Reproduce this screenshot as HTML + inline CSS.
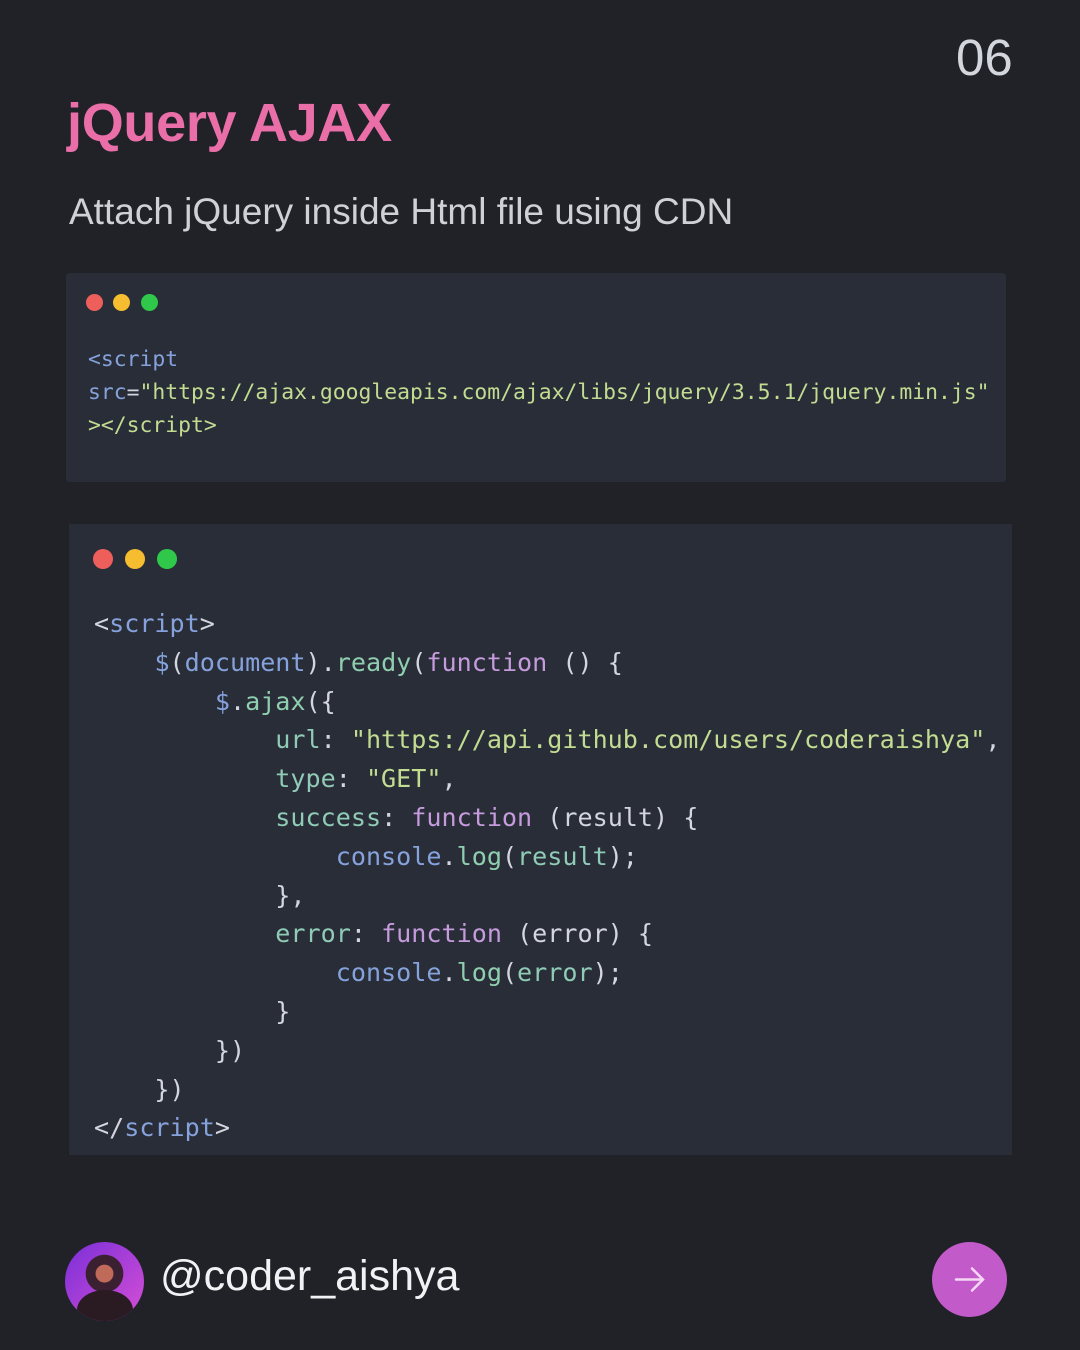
<!DOCTYPE html>
<html><head><style>
body{margin:0;width:1080px;height:1350px;background:#202228;position:relative;overflow:hidden;font-family:"Liberation Sans",sans-serif}
.a{position:absolute}
.code{font-family:"DejaVu Sans Mono","Liberation Mono",monospace;white-space:pre;color:#d3d6de}
.t{color:#86a2dc}.s{color:#c2dc92}.p{color:#8fcbb6}.k{color:#c59bdd}.m{color:#8fcfb0}
.dot{position:absolute;border-radius:50%}
</style></head><body>
<div class="a" style="left:956px;top:28px;font-size:51px;color:#d4d6de">06</div>
<div class="a" style="left:67px;top:92px;font-size:54px;font-weight:bold;color:#ea6fa8;letter-spacing:-0.3px">jQuery AJAX</div>
<div class="a" style="left:69px;top:191px;font-size:37px;color:#d0d1d6">Attach jQuery inside Html file using CDN</div>

<div class="a" style="left:66px;top:273px;width:940px;height:209px;background:#292d37;border-radius:3px">
<div class="dot" style="left:20px;top:21px;width:17px;height:17px;background:#ee5f5b"></div>
<div class="dot" style="left:47px;top:21px;width:17px;height:17px;background:#f5bd2f"></div>
<div class="dot" style="left:75px;top:21px;width:17px;height:17px;background:#2fc84a"></div>
<div class="a code" style="left:22px;top:70px;font-size:21.4px;line-height:33px"><span class="t">&lt;script</span>
<span class="t">src</span>=<span class="s">"https://ajax.googleapis.com/ajax/libs/jquery/3.5.1/jquery.min.js"</span>
<span class="s">&gt;&lt;/script&gt;</span></div>
</div>

<div class="a" style="left:69px;top:524px;width:943px;height:631px;background:#292d37">
<div class="dot" style="left:24px;top:25px;width:20px;height:20px;background:#ee5f5b"></div>
<div class="dot" style="left:56px;top:25px;width:20px;height:20px;background:#f5bd2f"></div>
<div class="dot" style="left:88px;top:25px;width:20px;height:20px;background:#2fc84a"></div>
<div class="a code" style="left:25px;top:81px;font-size:25.1px;line-height:38.8px">&lt;<span class="t">script</span>&gt;
    <span class="t">$</span>(<span class="t">document</span>).<span class="m">ready</span>(<span class="k">function</span> () {
        <span class="t">$</span>.<span class="m">ajax</span>({
            <span class="p">url</span>: <span class="s">"https://api.github.com/users/coderaishya"</span>,
            <span class="p">type</span>: <span class="s">"GET"</span>,
            <span class="p">success</span>: <span class="k">function</span> (result) {
                <span class="t">console</span>.<span class="m">log</span>(<span class="p">result</span>);
            },
            <span class="p">error</span>: <span class="k">function</span> (error) {
                <span class="t">console</span>.<span class="m">log</span>(<span class="p">error</span>);
            }
        })
    })
&lt;/<span class="t">script</span>&gt;</div>
</div>

<div class="a" style="left:65px;top:1242px;width:79px;height:79px;border-radius:50%;background:radial-gradient(circle at 50% 40%,#c06a5a 0 14%,#3a2030 15% 30%,transparent 31%),linear-gradient(135deg,#7a2fd8,#d74fd6);overflow:hidden">
<div class="a" style="left:12px;top:48px;width:56px;height:40px;border-radius:50% 50% 0 0;background:#2a1a22"></div></div>
<div class="a" style="left:160px;top:1252px;font-size:43px;color:#f2f2f4">@coder_aishya</div>
<div class="a" style="left:932px;top:1242px;width:75px;height:75px;border-radius:50%;background:#c25ac9">
<svg width="75" height="75" viewBox="0 0 75 75"><path d="M24 37.5H51M40 26.5L51 37.5L40 48.5" stroke="#f6d8f6" stroke-width="2.5" fill="none" stroke-linecap="round"/></svg></div>
</body></html>
